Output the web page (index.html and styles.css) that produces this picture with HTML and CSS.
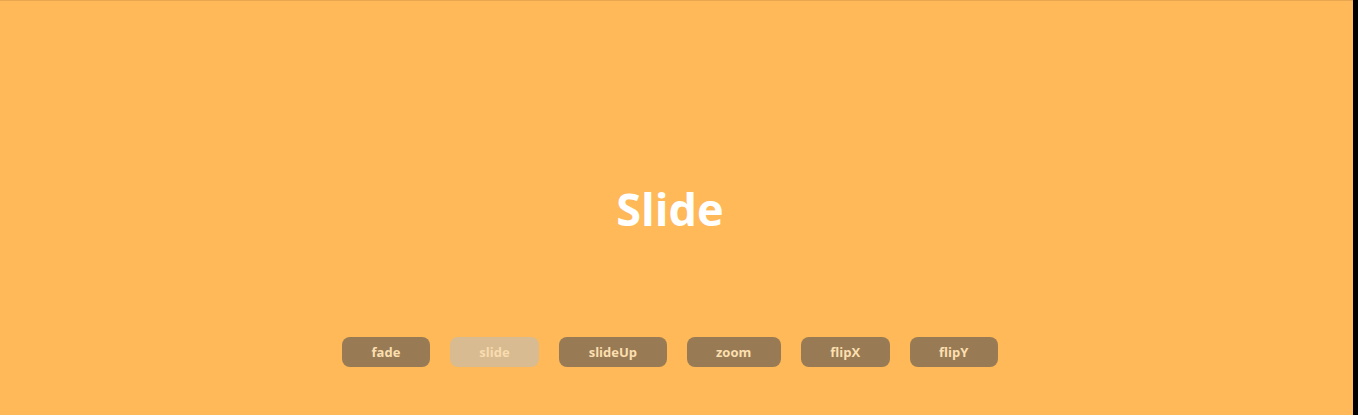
FILE: index.html
```html
<!DOCTYPE html>
<html>
<head>
<meta charset="utf-8">
<link rel="stylesheet" href="styles.css">
</head>
<body>
<div class="stage">
  <div class="slide-area">
    <h1 class="title">Slide</h1>
  </div>
  <div class="controls">
    <button class="btn">fade</button>
    <button class="btn active">slide</button>
    <button class="btn">slideUp</button>
    <button class="btn">zoom</button>
    <button class="btn">flipX</button>
    <button class="btn">flipY</button>
  </div>
</div>
<div class="edge"></div>
</body>
</html>
```
FILE: styles.css
```css
html, body {
  margin: 0;
  padding: 0;
  height: 100%;
}
body {
  display: flex;
  background: #000;
  font-family: "Open Sans", "Liberation Sans", sans-serif;
}
.stage {
  flex: 0 0 1353px;
  height: 415px;
  background: #FFB958;
  border-top: 1px solid #E8A650;
  box-sizing: border-box;
  display: flex;
  flex-direction: column;
  padding-right: 13px;
}
.slide-area {
  height: 336px;
  display: flex;
  align-items: center;
  justify-content: center;
  padding-top: 78px;
  box-sizing: border-box;
}
.title {
  margin: 0;
  color: #fff;
  font-size: 45px;
  font-weight: 700;
  letter-spacing: 0;
}
.controls {
  display: flex;
  justify-content: center;
  gap: 20px;
}
.btn {
  height: 30px;
  padding: 0 29.5px;
  border: none;
  border-radius: 8px;
  background: #987B54;
  color: #FCDFB0;
  font-family: "Open Sans", "Liberation Sans", sans-serif;
  font-size: 13px;
  font-weight: 700;
}
.btn.active {
  background: #D8BB90;
  color: #F9DCAF;
}
.edge {
  flex: 1;
}
```
